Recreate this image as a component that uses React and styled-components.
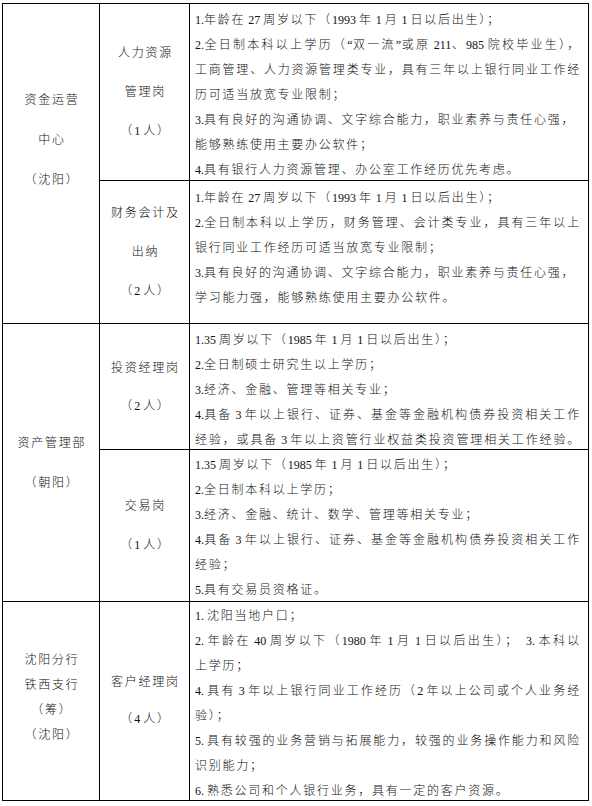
import React from 'react';
import styled, { createGlobalStyle } from 'styled-components';

const GlobalStyle = createGlobalStyle`
	html,
	body {
		margin: 0;
		padding: 0;
		background: #fff;
	}
	body {
		font-family: 'Liberation Serif', 'Noto Sans CJK SC', serif;
		font-weight: 300;
		color: #111;
	}
`;

const Page = styled.div`
	padding: 3px 0 0 2px;
`;

const Grid = styled.div`
	display: grid;
	box-sizing: border-box;
	width: 587px;
	grid-template-columns: 97px 90px 399px;
	grid-template-rows: 177px 143px 126px 152px 199px;
	border-top: 1px solid #000;
	border-left: 1px solid #000;
	font-size: 12px;
	letter-spacing: 1.75px;
`;

const Cell = styled.div`
	box-sizing: border-box;
	min-width: 0;
	border-right: 1px solid #000;
	border-bottom: 1px solid #000;
`;

// department / position columns, text centred both ways
const Label = styled(Cell)`
	grid-column: ${(props) => props.$col};
	grid-row: span ${(props) => props.$span || 1};
	display: flex;
	flex-direction: column;
	justify-content: center;
	align-items: center;
	padding-left: 2px;
	padding-bottom: ${(props) => props.$lift || 0}px;
	line-height: ${(props) => props.$lh}px;
`;

const Req = styled(Cell)`
	grid-column: 3;
	padding: ${(props) => props.$top}px 7px 0 5px;
	line-height: 25px;
`;

const Line = styled.div`
	white-space: nowrap;
	text-align: ${(props) => (props.$full ? 'justify' : 'left')};
	text-align-last: ${(props) => (props.$full ? 'justify' : 'auto')};
`;

const Latin = styled.span`
	letter-spacing: 0;
	font-weight: 400;
`;

const split = (text) =>
	text
		.split(/([\x20-\x7e\u00a0\u201c\u201d]+)/)
		.map((part, i) => (i % 2 ? <Latin key={i}>{part}</Latin> : part));

const groups = [
	{
		dept: ['资金运营', '中心', '（沈阳）'],
		deptLh: 40,
		deptLift: 47,
		posts: [
			{
				name: ['人力资源', '管理岗', '（1 人）'],
				lh: 39,
				top: 4,
				lines: [
					['1.年龄在 27 周岁以下（1993 年 1 月 1 日以后出生）；'],
					['2.全日制本科以上学历（“双一流”或原 211、985 院校毕业生），', true],
					['工商管理、人力资源管理类专业，具有三年以上银行同业工作经', true],
					['历可适当放宽专业限制；'],
					['3.具有良好的沟通协调、文字综合能力，职业素养与责任心强，'],
					['能够熟练使用主要办公软件；'],
					['4.具有银行人力资源管理、办公室工作经历优先考虑。'],
				],
			},
			{
				name: ['财务会计及', '出纳', '（2 人）'],
				lh: 39,
				top: 5,
				lines: [
					['1.年龄在 27 周岁以下（1993 年 1 月 1 日以后出生）；'],
					['2.全日制本科以上学历，财务管理、会计类专业，具有三年以上', true],
					['银行同业工作经历可适当放宽专业限制；'],
					['3.具有良好的沟通协调、文字综合能力，职业素养与责任心强，'],
					['学习能力强，能够熟练使用主要办公软件。'],
				],
			},
		],
	},
	{
		dept: ['资产管理部', '（朝阳）'],
		deptLh: 40,
		deptLift: 0,
		posts: [
			{
				name: ['投资经理岗', '（2 人）'],
				lh: 38,
				top: 4,
				lines: [
					['1.35 周岁以下（1985 年 1 月 1 日以后出生）；'],
					['2.全日制硕士研究生以上学历；'],
					['3.经济、金融、管理等相关专业；'],
					['4.具备 3 年以上银行、证券、基金等金融机构债券投资相关工作', true],
					['经验，或具备 3 年以上资管行业权益类投资管理相关工作经验。', true],
				],
			},
			{
				name: ['交易岗', '（1 人）'],
				lh: 39,
				top: 3,
				lines: [
					['1.35 周岁以下（1985 年 1 月 1 日以后出生）；'],
					['2.全日制本科以上学历；'],
					['3.经济、金融、统计、数学、管理等相关专业；'],
					['4.具备 3 年以上银行、证券、基金等金融机构债券投资相关工作', true],
					['经验；'],
					['5.具有交易员资格证。'],
				],
			},
		],
	},
	{
		dept: ['沈阳分行', '铁西支行', '（筹）', '（沈阳）'],
		deptLh: 25,
		deptLift: 7,
		posts: [
			{
				name: ['客户经理岗', '（4 人）'],
				lh: 37,
				top: 2,
				lines: [
					['1. 沈阳当地户口；'],
					['2. 年龄在 40 周岁以下（1980 年 1 月 1 日以后出生）；\u00a0 3. 本科以', true],
					['上学历；'],
					['4. 具有 3 年以上银行同业工作经历（2 年以上公司或个人业务经', true],
					['验）；'],
					['5. 具有较强的业务营销与拓展能力，较强的业务操作能力和风险', true],
					['识别能力；'],
					['6. 熟悉公司和个人银行业务，具有一定的客户资源。'],
				],
			},
		],
	},
];

function App() {
	return (
		<Page>
			<GlobalStyle />
			<Grid>
				{groups.map((group, g) => (
					<React.Fragment key={g}>
						<Label $col={1} $span={group.posts.length} $lh={group.deptLh} $lift={group.deptLift}>
							{group.dept.map((t) => (
								<div key={t}>{split(t)}</div>
							))}
						</Label>
						{group.posts.map((post, p) => (
							<React.Fragment key={p}>
								<Label $col={2} $lh={post.lh}>
									{post.name.map((t) => (
										<div key={t}>{split(t)}</div>
									))}
								</Label>
								<Req $top={post.top}>
									{post.lines.map(([t, full], i) => (
										<Line key={i} $full={full}>
											{split(t)}
										</Line>
									))}
								</Req>
							</React.Fragment>
						))}
					</React.Fragment>
				))}
			</Grid>
		</Page>
	);
}

export default App;
